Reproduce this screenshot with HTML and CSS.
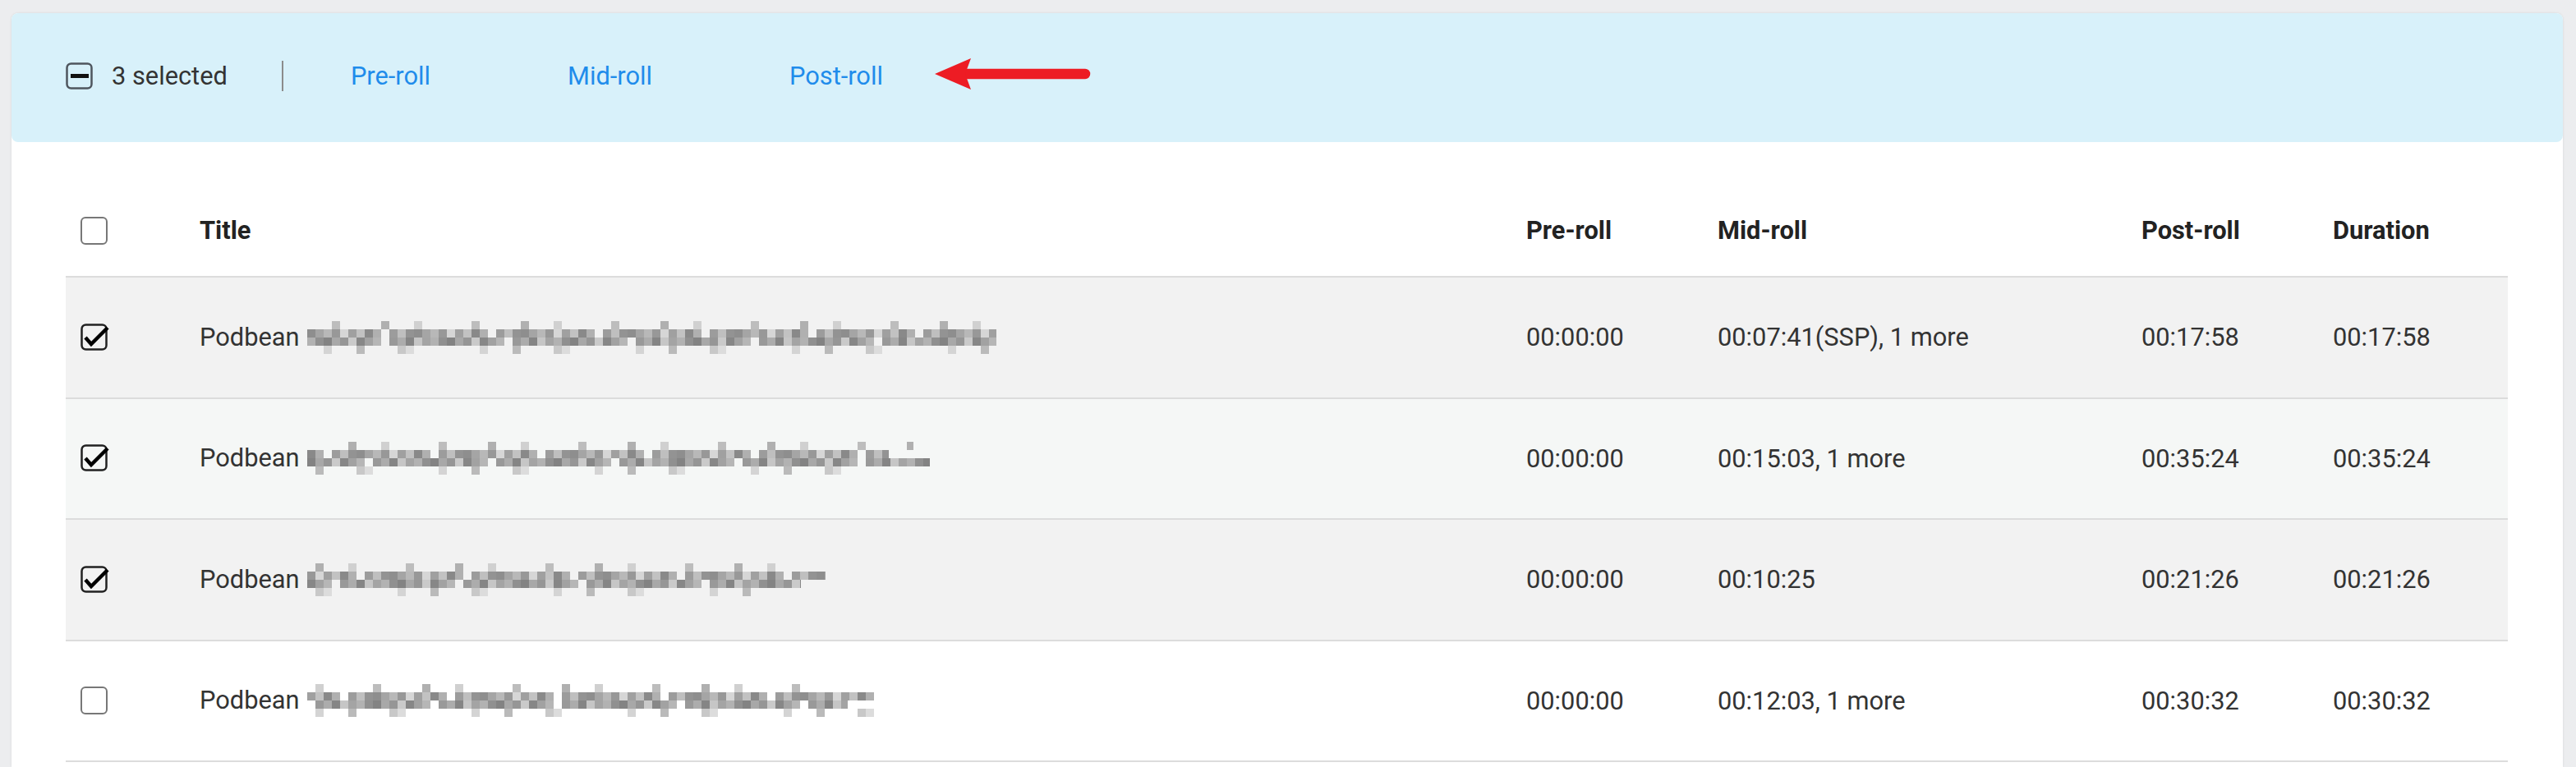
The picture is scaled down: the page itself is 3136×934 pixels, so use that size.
FILE: index.html
```html
<!DOCTYPE html>
<html>
<head>
	<meta charset="utf-8">
	<title>Episodes - ad slots</title>
	<link rel="stylesheet" href="styles.css">
</head>
<body>
	<div class="card">
		<!-- bulk action bar -->
		<div class="bulkbar">
			<svg class="cb" width="34" height="34" viewBox="0 0 34 34">
				<rect x="1.5" y="1.5" width="30" height="30" rx="5" fill="none" stroke="#4f565e" stroke-width="2.5"/>
				<rect x="6" y="14" width="22" height="5" fill="#111"/>
			</svg>
			<span class="bulk-count">3 selected</span>
			<span class="bulk-sep"></span>
			<a class="bulk-link" href="#">Pre-roll</a>
			<a class="bulk-link" href="#">Mid-roll</a>
			<a class="bulk-link" href="#">Post-roll</a>
			<svg class="note-arrow" width="192" height="40" viewBox="0 0 192 40">
				<line x1="36" y1="19" x2="183" y2="19" stroke="#ed1c24" stroke-width="12.5" stroke-linecap="round"/>
				<polygon points="0,19 44,0 37,19 44,38" fill="#ed1c24"/>
			</svg>
		</div>

		<!-- episodes -->
		<div class="table-wrap">
			<table class="episodes">
				<colgroup>
					<col class="c-check">
					<col>
					<col class="c-time">
					<col class="c-mid">
					<col class="c-time">
					<col class="c-dur">
				</colgroup>
				<thead>
					<tr>
						<th class="cell-check">
							<svg class="cb" width="34" height="34" viewBox="0 0 34 34"><rect x="1" y="1" width="31" height="32" rx="5" fill="#fff" stroke="#777" stroke-width="2"/></svg>
						</th>
						<th>Title</th>
						<th>Pre-roll</th>
						<th>Mid-roll</th>
						<th>Post-roll</th>
						<th>Duration</th>
					</tr>
				</thead>
				<tbody>
					<tr class="row-sel">
						<td class="cell-check">
							<svg class="cb" width="36" height="34" viewBox="0 0 36 34"><rect x="1.5" y="1.5" width="30" height="30" rx="5" fill="none" stroke="#222" stroke-width="2.5"/><polyline points="6,17 13,25 33,5" fill="none" stroke="#000" stroke-width="4.5"/></svg>
						</td>
						<td>Podbean <span class="mosaic m1"></span></td>
						<td>00:00:00</td>
						<td>00:07:41(SSP), 1 more</td>
						<td>00:17:58</td>
						<td>00:17:58</td>
					</tr>
					<tr class="row-hover">
						<td class="cell-check">
							<svg class="cb" width="36" height="34" viewBox="0 0 36 34"><rect x="1.5" y="1.5" width="30" height="30" rx="5" fill="none" stroke="#222" stroke-width="2.5"/><polyline points="6,17 13,25 33,5" fill="none" stroke="#000" stroke-width="4.5"/></svg>
						</td>
						<td>Podbean <span class="mosaic m2"></span></td>
						<td>00:00:00</td>
						<td>00:15:03, 1 more</td>
						<td>00:35:24</td>
						<td>00:35:24</td>
					</tr>
					<tr class="row-sel">
						<td class="cell-check">
							<svg class="cb" width="36" height="34" viewBox="0 0 36 34"><rect x="1.5" y="1.5" width="30" height="30" rx="5" fill="none" stroke="#222" stroke-width="2.5"/><polyline points="6,17 13,25 33,5" fill="none" stroke="#000" stroke-width="4.5"/></svg>
						</td>
						<td>Podbean <span class="mosaic m3"></span></td>
						<td>00:00:00</td>
						<td>00:10:25</td>
						<td>00:21:26</td>
						<td>00:21:26</td>
					</tr>
					<tr>
						<td class="cell-check">
							<svg class="cb" width="34" height="34" viewBox="0 0 34 34"><rect x="1" y="1" width="31" height="32" rx="5" fill="#fff" stroke="#777" stroke-width="2"/></svg>
						</td>
						<td>Podbean <span class="mosaic m4"></span></td>
						<td>00:00:00</td>
						<td>00:12:03, 1 more</td>
						<td>00:30:32</td>
						<td>00:30:32</td>
					</tr>
				</tbody>
			</table>
		</div>
	</div>
</body>
</html>
```

FILE: styles.css
```css
html, body{
	height: 100%;
}
body{
	margin: 0;
	padding: 16px 16px 0 14px;
	background: #ecedef;
	font-family: Roboto, "Liberation Sans", sans-serif;
	font-size: 30.8px;
	color: #333;
	box-sizing: border-box;
	overflow: hidden;
}
.card{
	background: #fff;
	border-radius: 8px 8px 0 0;
	box-shadow: 0 0 3px rgba(0,0,0,.10);
	height: 100%;
}
.cb{
	display: block;
	flex: none;
}

/* bulk bar */
.bulkbar{
	display: flex;
	align-items: center;
	height: 153px;
	padding: 0 0 4px 66px;
	background: #d8f1fa;
	border-radius: 8px;
}
.bulk-count{
	margin-left: 22px;
	color: #333;
}
.bulk-sep{
	width: 2px;
	height: 37px;
	background: #8c8c8c;
	margin: 0 82px 0 66px;
}
.bulk-link{
	color: #1f8ceb;
	text-decoration: none;
}
.bulk-link + .bulk-link{
	margin-left: 167px;
}
.note-arrow{
	display: block;
	margin: -4px 0 0 63px;
}

/* table */
.table-wrap{
	padding: 52px 67px 0 66px;
}
.episodes{
	width: 100%;
	border-collapse: collapse;
	table-layout: fixed;
}
.episodes col.c-check{ width: 163px; }
.episodes col.c-time{ width: 233px; }
.episodes col.c-mid{ width: 516px; }
.episodes col.c-dur{ width: 213px; }
.episodes th{
	height: 111px;
	padding: 0;
	text-align: left;
	font-weight: 700;
	color: #222;
	border-bottom: 2px solid #dcdcdc;
}
.episodes td{
	height: 145.5px;
	padding: 0;
	white-space: nowrap;
	border-bottom: 2px solid #dcdcdc;
}
.episodes .cell-check{
	padding-left: 18px;
}
.episodes tr.row-sel td{ background: #f2f2f2; }
.episodes tr.row-hover td{ background: #f5f7f6; }

/* pixelated (hidden) episode names */
.mosaic{
	display: inline-block;
	height: 40px;
	vertical-align: -10px;
	margin-left: 2px;
	background:
		repeating-linear-gradient(90deg, transparent 0 30px, #bdbdbd 30px 40px, transparent 40px 90px, #b0b0b0 90px 100px, transparent 100px 130px, #d0d0d0 130px 140px, transparent 140px 170px) 0 0 / 100% 10px no-repeat,
		repeating-linear-gradient(90deg, #8e8e8e 0 10px, #a5a5a5 10px 20px, #b8b8b8 20px 30px, #989898 30px 40px, #d6d6d6 40px 50px, #a0a0a0 50px 60px, #c2c2c2 60px 70px, #898989 70px 80px, #b0b0b0 80px 90px, transparent 90px 100px, #9c9c9c 100px 110px, #bfbfbf 110px 120px, #939393 120px 130px) 0 10px / 100% 10px no-repeat,
		repeating-linear-gradient(90deg, #b2b2b2 0 10px, #909090 10px 20px, #838383 20px 30px, #a8a8a8 30px 40px, #969696 40px 50px, #cacaca 50px 60px, #878787 60px 70px, #a2a2a2 70px 80px, #b6b6b6 80px 90px, transparent 90px 100px, #999 100px 110px, #acacac 110px 120px, #858585 120px 130px, #c6c6c6 130px 140px, #a4a4a4 140px 150px) 0 20px / 100% 10px no-repeat,
		repeating-linear-gradient(90deg, transparent 0 20px, #d4d4d4 20px 30px, transparent 30px 60px, #bababa 60px 70px, transparent 70px 110px, #c8c8c8 110px 120px, #dcdcdc 120px 130px, transparent 130px 190px) 0 30px / 100% 10px no-repeat;
}
.mosaic.m1{ width: 839px; }
.mosaic.m2{ width: 778px; background-position: -40px 0, -70px 10px, -20px 20px, -50px 30px; }
.mosaic.m3{ width: 661px; background-position: -80px 0, -30px 10px, -60px 20px, -100px 30px; }
.mosaic.m4{ width: 748px; background-position: -120px 0, -50px 10px, -90px 20px, -10px 30px; }
```
